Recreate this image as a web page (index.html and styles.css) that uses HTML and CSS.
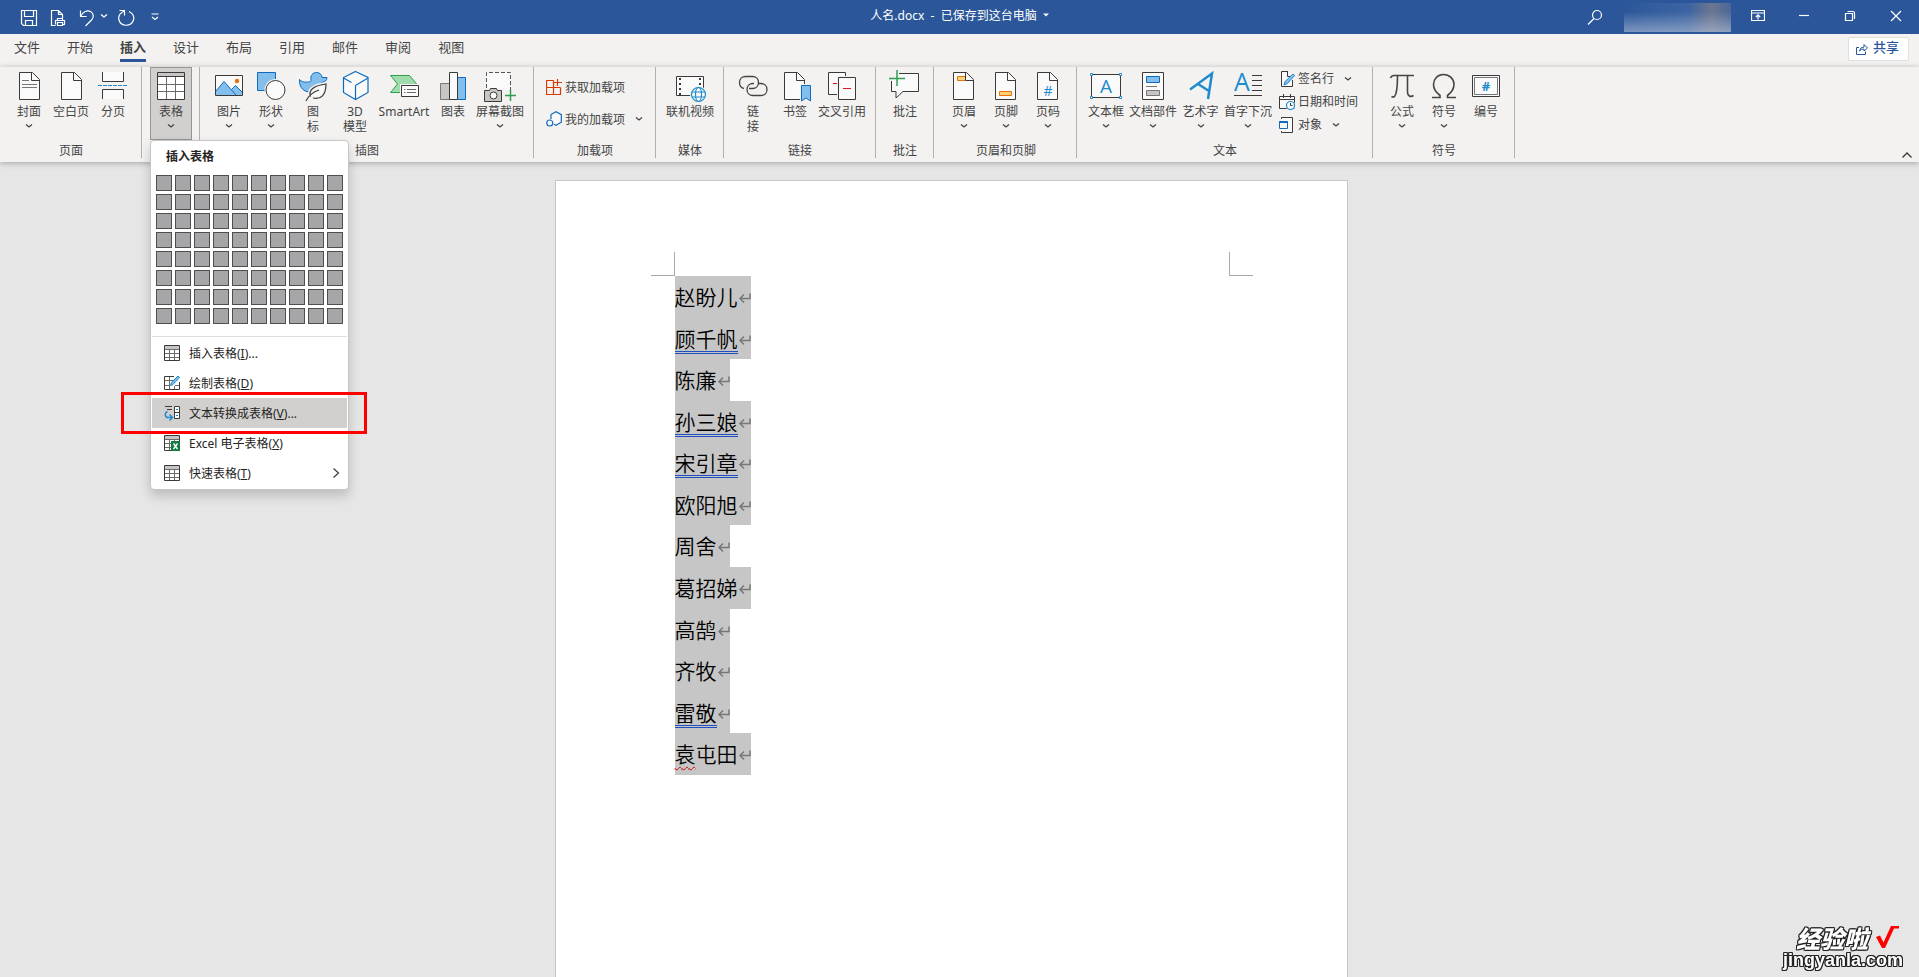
FILE: index.html
```html
<!DOCTYPE html>
<html lang="zh-CN">
<head>
<meta charset="utf-8">
<title>人名.docx</title>
<link rel="stylesheet" href="styles.css">
</head>
<body>
<svg class="defs" aria-hidden="true">
  <symbol id="doc" viewBox="0 0 32 32"><path d="M6.500 2.500h13l7 7v20h-20z" fill="#fafafa" stroke="#3b3a39"/><path d="M18.500 2.500v8h8" fill="none" stroke="#3b3a39"/></symbol>
  <symbol id="chev" viewBox="0 0 8 8"><path d="M1 2.500l3 2.500 3-2.500" fill="none" stroke="currentColor" stroke-width="1.300"/></symbol>
  <symbol id="table" viewBox="0 0 16 16"><path d="M.5.5h15v15H.5z" fill="#fff" stroke="#3b3a39"/><path d="M1 1h14v3H1z" fill="#c8c6c4"/><path d="M1 4.500h14M1 8.500h14M1 12.500h14M5.500 5v10M10.500 5v10" stroke="#6b6a68" fill="none"/></symbol>
  <symbol id="ret" viewBox="0 0 13 13"><path d="M12 1.500v5H2M6 2.500L2 6.500l4 4" fill="none" stroke="#777" stroke-width="1.500"/></symbol>
</svg>

<header class="titlebar">
  <div class="quick">
    <button class="qa" aria-label="保存"><svg width="18" height="18" viewBox="0 0 18 18"><path d="M1.500 1.500h15v15h-13l-2-2zM4.500 1.500v6h9v-6M5.500 16.500v-5h7v5"/></svg></button>
    <button class="qa" aria-label="打印预览"><svg width="18" height="18" viewBox="0 0 18 18"><path d="M6.500 16.500h-4v-15h7l4 4v4M9.500 1.500v4h4M8.500 11.500v-2h5v2M6.500 15.500v-4h9v4h-2M8.500 13.500h5v3h-5z"/></svg></button>
    <button class="qa" aria-label="撤消"><svg width="18" height="18" viewBox="0 0 18 18"><path d="M2.500 1.500v6h6M2.500 7.500C5 3 9 .5 12.500 2.500s3.500 6 1 8.500l-6 6"/></svg></button>
    <button class="qa narrow" aria-label="撤消选项"><svg width="8" height="8"><use href="#chev"/></svg></button>
    <button class="qa" aria-label="重复"><svg width="18" height="18" viewBox="0 0 18 18"><path d="M2.500 1.500h5v5M7.500 2C3 4 1 7.500 2 11c2 7 12 7 14.500 0C17.500 7 15 4 12 2.500"/></svg></button>
    <button class="qa custom" aria-label="自定义快速访问工具栏"><svg width="8" height="8" viewBox="0 0 8 8"><path d="M.5 1h7M1 4l3 2.500L7 4"/></svg></button>
  </div>
  <div class="doctitle">人名.docx&nbsp; -&nbsp; 已保存到这台电脑 <svg width="6" height="6" viewBox="0 0 6 6"><path d="M0 1.500h6l-3 3z" fill="#fff" stroke="none"/></svg></div>
  <div class="window">
    <button class="search" aria-label="搜索"><svg width="16" height="16" viewBox="0 0 16 16"><circle cx="10" cy="6" r="4.500"/><path d="M7 9.500L1 15.500"/></svg></button>
    <div class="account"></div>
    <button class="win" aria-label="功能区显示选项"><svg width="14" height="12" viewBox="0 0 14 12"><path d="M.5.500h13v10H.5zM.5 3h13M7 9.500V5M4.800 7L7 4.800 9.200 7"/></svg></button>
    <button class="win" aria-label="最小化"><svg width="12" height="12" viewBox="0 0 12 12"><path d="M1 5.500h10"/></svg></button>
    <button class="win" aria-label="还原"><svg width="12" height="12" viewBox="0 0 12 12"><path d="M1.500 3.500h7v7h-7zM3.500 1.500h5.500q1.500 0 1.500 1.500v6"/></svg></button>
    <button class="win" aria-label="关闭"><svg width="12" height="12" viewBox="0 0 12 12"><path d="M1 1l10 10M11 1L1 11"/></svg></button>
  </div>
</header>

<nav class="tabs">
  <button class="tab">文件</button><button class="tab">开始</button><button class="tab active">插入</button><button class="tab">设计</button><button class="tab">布局</button><button class="tab">引用</button><button class="tab">邮件</button><button class="tab">审阅</button><button class="tab">视图</button>
  <button class="share"><svg width="12" height="12" viewBox="0 0 12 12"><path d="M3 4.500H.5v7h9V8.500M3.500 8q.5-4 4.500-4V1.500L11.500 5 8 8V6Q5 6 3.500 8z"/></svg>共享</button>
</nav>

<section class="ribbon">
  <div class="group">
    <div class="tools">
      <button class="big"><svg viewBox="0 0 32 32"><use href="#doc"/><path d="M9 10.500h7M9 14.500h15M9 17.500h15" stroke="#777"/></svg><span>封面</span><svg class="chev"><use href="#chev"/></svg></button>
      <button class="big"><svg viewBox="0 0 32 32"><use href="#doc"/></svg><span>空白页</span></button>
      <button class="big"><svg viewBox="0 0 32 32"><path d="M5.500 2v9.500h21V2M5.500 29v-9.500h21V29" fill="#fafafa" stroke="#3b3a39"/><path d="M1 15.500h30" stroke="#1e8bcd" stroke-dasharray="4 1"/></svg><span>分页</span></button>
    </div>
    <div class="caption">页面</div>
  </div>

  <div class="group anchor">
    <div class="tools">
      <button class="big pressed"><svg viewBox="0 0 32 32"><path d="M2.500 2.500h27v27h-27z" fill="#fff" stroke="#3b3a39"/><path d="M3 3h26v3H3z" fill="#c8c6c4"/><path d="M3 6.500h26" stroke="#3b3a39"/><path d="M3 14.500h26M3 21.500h26M11.500 7v22M20.500 7v22" stroke="#6b6a68"/></svg><span>表格</span><svg class="chev"><use href="#chev"/></svg></button>
    </div>
    <div class="menu">
      <h2 class="menu-title">插入表格</h2>
      <div class="cells">
        <i></i><i></i><i></i><i></i><i></i><i></i><i></i><i></i><i></i><i></i>
        <i></i><i></i><i></i><i></i><i></i><i></i><i></i><i></i><i></i><i></i>
        <i></i><i></i><i></i><i></i><i></i><i></i><i></i><i></i><i></i><i></i>
        <i></i><i></i><i></i><i></i><i></i><i></i><i></i><i></i><i></i><i></i>
        <i></i><i></i><i></i><i></i><i></i><i></i><i></i><i></i><i></i><i></i>
        <i></i><i></i><i></i><i></i><i></i><i></i><i></i><i></i><i></i><i></i>
        <i></i><i></i><i></i><i></i><i></i><i></i><i></i><i></i><i></i><i></i>
        <i></i><i></i><i></i><i></i><i></i><i></i><i></i><i></i><i></i><i></i>
      </div>
      <div class="items">
        <button class="item"><svg viewBox="0 0 16 16"><use href="#table"/></svg><span>插入表格(<u>I</u>)...</span></button>
        <button class="item"><svg viewBox="0 0 16 16"><path d="M10 1.500H.5v13h15V7" fill="#fff" stroke="#3b3a39"/><path d="M1 5.500h8M1 10.500h5M5.500 2v12M10.500 11v3M11 10.500h4" stroke="#6b6a68"/><path d="M6.500 10.500l1-3L14 1l1.500 1.500L9 9.500z" fill="#83beec" stroke="#1e8bcd"/></svg><span>绘制表格(<u>D</u>)</span></button>
        <button class="item hover"><svg viewBox="0 0 16 16"><path d="M1 1.500h7M3 4.500h5" stroke="#3b3a39"/><path d="M3.500 6.500C0 8 1 12.500 4 12.500h4M5.500 9.500l3 3-3 3" fill="none" stroke="#1e8bcd" stroke-width="1.500"/><path d="M10.500 1.500h5v12h-5zM10.500 7.500h5" fill="#fff" stroke="#3b3a39"/><path d="M12 4.500h2M12 10.500h2" stroke="#1e8bcd"/></svg><span>文本转换成表格(<u>V</u>)...</span></button>
        <button class="item"><svg viewBox="0 0 16 16"><use href="#table"/><path d="M7 6h9v10H7z" fill="#107c41"/><path d="M9.500 8.500l4 5.500M13.500 8.500l-4 5.500" stroke="#fff" stroke-width="1.400"/></svg><span>Excel 电子表格(<u>X</u>)</span></button>
        <button class="item"><svg viewBox="0 0 16 16"><use href="#table"/></svg><span>快速表格(<u>T</u>)</span><svg class="more" viewBox="0 0 8 10"><path d="M1.500.5L6.500 5l-5 4.500" fill="none" stroke="#3b3a39" stroke-width="1.200"/></svg></button>
      </div>
    </div>
  </div>

  <div class="group">
    <div class="tools">
      <button class="big"><svg viewBox="0 0 32 32"><path d="M2.500 5.500h27v20h-27z" fill="#fafafa" stroke="#3b3a39"/><path d="M3 21l8-9.500 7.500 8 4-4L29 22v3H3z" fill="#83beec"/><path d="M3 21l8-9.500L23 25M18.500 19.500l4-4L29 22" fill="none" stroke="#0f6cbd"/><circle cx="24" cy="11" r="2.200" fill="#e8710a"/></svg><span>图片</span><svg class="chev"><use href="#chev"/></svg></button>
      <button class="big"><svg viewBox="0 0 32 32"><path d="M2.500 2.500h18v18h-18z" fill="#83beec" stroke="#0f6cbd"/><circle cx="20.500" cy="20" r="11" fill="#f3f2f1"/><circle cx="20.500" cy="20" r="9.500" fill="#fafafa" stroke="#3b3a39"/></svg><span>形状</span><svg class="chev"><use href="#chev"/></svg></button>
      <button class="big"><svg viewBox="0 0 32 32"><path d="M14 9.500c-1-4 2-7 5.500-7 3 0 5.500 2 5.500 5h5c0 3-2 4.500-5.500 5 1 5-4 10-11 9.500C7 22 2 18 2.500 9.500c2 2 4 3 7 2.500 3 0 5 0 4.500-2.500z" fill="#83beec" stroke="#0f6cbd"/><path d="M13.500 26.500c-2.500-7 4-11 15.500-12.500 0 11-5 16-13 14z" fill="#fafafa" stroke="#f3f2f1" stroke-width="4"/><path d="M13.500 26.500c-2.500-7 4-11 15.500-12.500 0 11-5 16-13 14M9 31c3-6 7-9 13-11" fill="none" stroke="#3b3a39" stroke-width="1.200"/></svg><span>图<br>标</span></button>
      <button class="big"><svg viewBox="0 0 32 32"><path d="M16.500 1.500l12.500 6v15l-12.500 7-12-7v-15z" fill="#fafafa" stroke="#0f6cbd" stroke-width="1.200"/><path d="M16.500 29V15.500M29 8l-12.500 7.500M4.500 8l8 4.500" fill="none" stroke="#0f6cbd" stroke-width="1.200"/></svg><span>3D<br>模型</span></button>
      <button class="big wide"><svg viewBox="0 0 32 32"><path d="M2.500 5.500h19l7.500 9-7 8H2.500l7-8.500z" fill="#a0dcab" stroke="#2e9f50"/><path d="M12 14h20v14H12z" fill="#f3f2f1"/><path d="M13.500 15.500h17v11h-17z" fill="#fafafa" stroke="#3b3a39"/><path d="M16 19.500h1.500M19 19.500h9M16 22.500h1.500M19 22.500h9" stroke="#6b6a68"/></svg><span>SmartArt</span></button>
      <button class="big"><svg viewBox="0 0 32 32"><path d="M3.500 13.500h9v16h-9z" fill="#c8c6c4" stroke="#777"/><path d="M20.500 7.500h8v22h-8z" fill="#83beec" stroke="#0f6cbd"/><path d="M12.500 2.500h8v27h-8z" fill="#fafafa" stroke="#3b3a39"/></svg><span>图表</span></button>
      <button class="big four"><svg viewBox="0 0 32 32"><path d="M2.500 18v-15.500h24V20" fill="#fafafa" stroke="#555" stroke-dasharray="4 2"/><path d="M.5 20.500h5l1-2h6l1 2h4v11H.5z" fill="#c8c6c4" stroke="#3b3a39"/><circle cx="9.500" cy="25.500" r="3.500" fill="#fafafa" stroke="#3b3a39"/><path d="M26.500 20v11M21 25.500h11" stroke="#2e9f50" stroke-width="1.500"/></svg><span>屏幕截图</span><svg class="chev"><use href="#chev"/></svg></button>
    </div>
    <div class="caption">插图</div>
  </div>

  <div class="group">
    <div class="tools stack two">
      <button class="small"><svg viewBox="0 0 16 16"><path d="M7.500 1.500h-7v14h14v-7M.5 8.500h14M7.500 1.500v14M11.500 0v7M8 3.500h8" fill="none" stroke="#d83b01" stroke-width="1.200"/></svg><span>获取加载项</span></button>
      <button class="small"><svg viewBox="0 0 16 16"><path d="M5 8V3.500L10 .7l5.300 3v7.500l-5.300 3-2-1" fill="#fafafa" stroke="#0f6cbd" stroke-width="1.200"/><circle cx="3.800" cy="12" r="3" fill="#fafafa" stroke="#0f6cbd" stroke-width="1.200"/></svg><span>我的加载项</span><svg class="chev"><use href="#chev"/></svg></button>
    </div>
    <div class="caption">加载项</div>
  </div>

  <div class="group">
    <div class="tools">
      <button class="big four"><svg viewBox="0 0 32 32"><path d="M2.500 6.500h27v19h-27z" fill="#fafafa" stroke="#3b3a39"/><path d="M6 8v17M26 8v8" stroke="#3b3a39" stroke-width="2" stroke-dasharray="2 3"/><circle cx="24.500" cy="24.500" r="8.500" fill="#f3f2f1"/><g fill="none" stroke="#1e8bcd" stroke-width="1.200"><circle cx="24.500" cy="24.500" r="7" fill="#fafafa"/><ellipse cx="24.500" cy="24.500" rx="3" ry="7"/><path d="M18 22h13M18 27h13"/></g></svg><span>联机视频</span></button>
    </div>
    <div class="caption">媒体</div>
  </div>

  <div class="group">
    <div class="tools">
      <button class="big"><svg viewBox="0 0 32 32" fill="none" stroke="#444" stroke-width="1.300"><path d="M7 18.500C4.500 18 2.500 15.500 2.500 12.500c0-3.500 2.500-6 6-6h7c3.500 0 6 2.500 6 6s-2.500 6-6 6H12"/><path d="M21 13.500h3c3.500 0 6 2.500 6 6s-2.500 6-6 6h-8c-3.500 0-6-2.500-6-6s2.500-6 6-6h1"/></svg><span>链<br>接</span></button>
      <button class="big"><svg viewBox="0 0 32 32"><use href="#doc" x="-1"/><path d="M21 14h11v18H21z" fill="#f3f2f1"/><path d="M22.500 15.500h9V31l-4.500-3-4.500 3z" fill="#83beec" stroke="#0f6cbd"/></svg><span>书签</span></button>
      <button class="big four"><svg viewBox="0 0 32 32"><path d="M2.500 2.500h17v22h-17z" fill="#fafafa" stroke="#3b3a39"/><path d="M7 13.500h4" stroke="#e81123"/><path d="M11 6h19v25H11z" fill="#f3f2f1"/><path d="M12.500 7.500h17v22h-17z" fill="#fafafa" stroke="#3b3a39"/><path d="M17 18.500h8" stroke="#e81123"/></svg><span>交叉引用</span></button>
    </div>
    <div class="caption">链接</div>
  </div>

  <div class="group">
    <div class="tools">
      <button class="big"><svg viewBox="0 0 32 32"><path d="M10 3.500h19.500v18H14L7 28v-6.500H2.500V11" fill="#fafafa" stroke="#3b3a39"/><path d="M8 0v16M0 8.500h16" stroke="#2e9f50" stroke-width="1.500"/></svg><span>批注</span></button>
    </div>
    <div class="caption">批注</div>
  </div>

  <div class="group roomy">
    <div class="tools">
      <button class="big"><svg viewBox="0 0 32 32"><use href="#doc" x="-1"/><path d="M17 6.500H9.500v4H17" fill="#ffd27a" stroke="#e8710a"/></svg><span>页眉</span><svg class="chev"><use href="#chev"/></svg></button>
      <button class="big"><svg viewBox="0 0 32 32"><use href="#doc" x="-1"/><path d="M9.500 21.500h12v4h-12z" fill="#ffd27a" stroke="#e8710a"/></svg><span>页脚</span><svg class="chev"><use href="#chev"/></svg></button>
      <button class="big"><svg viewBox="0 0 32 32"><use href="#doc" x="-1"/><text class="hash" x="16" y="26" font-size="14">#</text></svg><span>页码</span><svg class="chev"><use href="#chev"/></svg></button>
    </div>
    <div class="caption">页眉和页脚</div>
  </div>

  <div class="group">
    <div class="tools">
      <button class="big"><svg viewBox="0 0 32 32"><path d="M1.500 4.500h29v23h-29z" fill="#fafafa" stroke="#3b3a39"/><text class="hash" x="16" y="23" font-size="19">A</text><path d="M.5 3.500h2v2h-2zM29.500 3.500h2v2h-2zM.5 26.500h2v2h-2zM29.500 26.500h2v2h-2z" fill="#fff" stroke="#1e8bcd"/></svg><span>文本框</span><svg class="chev"><use href="#chev"/></svg></button>
      <button class="big four"><svg viewBox="0 0 32 32"><path d="M5.500 2.500h21v27h-21z" fill="#fafafa" stroke="#3b3a39"/><path d="M9.500 6.500h13v6h-13z" fill="#83beec" stroke="#0f6cbd"/><path d="M9 16.500h11" stroke="#777"/><path d="M9.500 20.500h13v5h-13z" fill="#c8c6c4" stroke="#777"/></svg><span>文档部件</span><svg class="chev"><use href="#chev"/></svg></button>
      <button class="big art"><svg viewBox="0 0 32 32"><path d="M5 19.500L27 3.500 23 29M13 14l11 7" fill="none" stroke="#1e8bcd" stroke-width="2.500"/></svg><span>艺术字</span><svg class="chev"><use href="#chev"/></svg></button>
      <button class="big four"><svg viewBox="0 0 32 32"><text class="hash" x="10" y="21" font-size="25">A</text><path d="M20 5.500h10M20 10.500h10M20 15.500h10M20 20.500h10M2 25.500h28" stroke="#3b3a39"/></svg><span>首字下沉</span><svg class="chev"><use href="#chev"/></svg></button>
      <div class="stack">
        <button class="small"><svg viewBox="0 0 16 16"><path d="M9 .5H2.500v15h11V9" fill="#fafafa" stroke="#3b3a39"/><path d="M8.500.5v5h3" fill="none" stroke="#3b3a39"/><path d="M5 14l1-3.500L14 3l1.500 1.500-7 8z" fill="#83beec" stroke="#1e8bcd"/></svg><span>签名行</span><svg class="chev"><use href="#chev"/></svg></button>
        <button class="small"><svg viewBox="0 0 16 16"><path d="M.5 2.500h15v12H.5z" fill="#fafafa" stroke="#3b3a39"/><path d="M.5 5.500h15M4.500 0v4M11.500 0v4" stroke="#3b3a39"/><circle cx="11.500" cy="11.500" r="5" fill="#f3f2f1"/><circle cx="11.500" cy="11.500" r="4" fill="#fafafa" stroke="#1e8bcd" stroke-width="1.200"/><path d="M11.500 9v2.500h2" fill="none" stroke="#3b3a39"/></svg><span>日期和时间</span></button>
        <button class="small"><svg viewBox="0 0 16 16"><path d="M2.500 2V.5h11v15h-11V14" fill="#fafafa" stroke="#3b3a39"/><path d="M.5 4.500h8v7h-8z" fill="#fafafa" stroke="#0f6cbd"/><path d="M.5 5h8" stroke="#0f6cbd" stroke-width="2"/></svg><span>对象</span><svg class="chev"><use href="#chev"/></svg></button>
      </div>
    </div>
    <div class="caption">文本</div>
  </div>

  <div class="group">
    <div class="tools">
      <button class="big"><svg viewBox="0 0 32 32"><path d="M4.500 8q1-2.500 3.500-2.500h20M11.500 6c0 9 0 17-3 20.500q-1.500 1-3 0M21.500 6v16c0 4 3 5.500 6 3.500" fill="none" stroke="#444" stroke-width="1.600"/></svg><span>公式</span><svg class="chev"><use href="#chev"/></svg></button>
      <button class="big"><svg viewBox="0 0 32 32"><path d="M4 27.500h8v-2C7.500 22 5.500 18.500 5.500 14.500c0-5.500 4-10 10-10s10.500 4.500 10.500 10c0 4-2 7.500-6.500 11v2H28" fill="none" stroke="#444" stroke-width="1.600"/></svg><span>符号</span><svg class="chev"><use href="#chev"/></svg></button>
      <button class="big"><svg viewBox="0 0 32 32"><path d="M2.500 5.500h27v21h-27z" fill="#fafafa" stroke="#3b3a39"/><path d="M4.500 7.500h23v17h-23z" fill="none" stroke="#777"/><text class="hash bold" x="16" y="21" font-size="13">#</text></svg><span>编号</span></button>
    </div>
    <div class="caption">符号</div>
  </div>
  <button class="collapse" aria-label="折叠功能区"><svg width="10" height="6" viewBox="0 0 10 6"><path d="M.5 5.500L5 1l4.500 4.500" fill="none" stroke="#3b3a39" stroke-width="1.300"/></svg></button>
</section>

<main class="workspace">
  <article class="page">
    <div class="marks"><span class="mark left"></span><span class="mark right"></span></div>
    <div class="lines">
      <p><span>赵盼儿</span><svg><use href="#ret"/></svg></p>
      <p><span class="dbl">顾千帆</span><svg><use href="#ret"/></svg></p>
      <p><span>陈廉</span><svg><use href="#ret"/></svg></p>
      <p><span class="dbl">孙三娘</span><svg><use href="#ret"/></svg></p>
      <p><span class="dbl">宋引章</span><svg><use href="#ret"/></svg></p>
      <p><span>欧阳旭</span><svg><use href="#ret"/></svg></p>
      <p><span>周舍</span><svg><use href="#ret"/></svg></p>
      <p><span>葛招娣</span><svg><use href="#ret"/></svg></p>
      <p><span>高鹄</span><svg><use href="#ret"/></svg></p>
      <p><span>齐牧</span><svg><use href="#ret"/></svg></p>
      <p><span class="dbl">雷敬</span><svg><use href="#ret"/></svg></p>
      <p><span><em class="typo">袁</em>屯田</span><svg><use href="#ret"/></svg></p>
    </div>
  </article>
</main>

<aside class="watermark">
  <div class="wm-top"><span>经验啦</span><svg width="26" height="24" viewBox="0 0 26 24"><path d="M3 12l4-1.500 3.500 7L18 1h8v2.500h-5L12 23H9z" fill="#f00"/></svg></div>
  <div class="wm-url">jingyanla.com</div>
</aside>
</body>
</html>
```
FILE: styles.css
```css
* { box-sizing: border-box; }

body {
  margin: 0;
  min-height: 100vh;
  display: flex;
  flex-direction: column;
  font: 12px/15px "Noto Sans", "Noto Sans CJK SC", sans-serif;
  color: #444;
  background: #e6e6e6;
  overflow: hidden;
}

button {
  margin: 0;
  padding: 0;
  border: 0;
  background: none;
  font: inherit;
  color: inherit;
}

svg { display: block; flex: none; }
.defs { position: absolute; width: 0; height: 0; }

/* Title bar */
.titlebar {
  height: 34px;
  display: grid;
  grid-template-columns: 1fr auto 1fr;
  background: #2b579a;
  color: #fff;
}
.titlebar svg { fill: none; stroke: #fff; stroke-width: 1.2; }
.quick { display: flex; align-items: center; padding: 2px 0 0 20px; gap: 11px; }
.qa { min-width: 18px; display: flex; justify-content: center; }
.narrow { min-width: 8px; margin: 0 -2px 4px -7px; }
.custom { min-width: 8px; margin: 0 0 2px 5px; }
.doctitle { display: flex; align-items: center; gap: 6px; padding-bottom: 4px; }
.window { display: flex; justify-content: flex-end; }
.search { width: 32px; display: grid; place-items: center; margin-right: 13px; }
.account {
  width: 107px;
  height: 29px;
  margin: 3px 4px 0 0;
  background:
    linear-gradient(to bottom, transparent 30%, rgba(190, 200, 220, .55)),
    linear-gradient(to right, #2b579a, #3c64a2 60%, #6c7690 82%, #4a6898);
}
.win { width: 46px; display: grid; place-items: center; padding-bottom: 2px; }

/* Tabs */
.tabs {
  height: 33px;
  display: flex;
  align-items: flex-start;
  gap: 27px;
  padding: 3px 10px 0 14px;
  background: #f3f2f1;
  font-size: 13px;
}
.tab { line-height: 20px; padding-bottom: 2px; border-bottom: 3px solid transparent; }
.active { font-weight: 700; border-color: #2b579a; }
.share {
  margin-left: auto;
  height: 24px;
  display: flex;
  align-items: center;
  gap: 5px;
  padding: 0 9px 3px 7px;
  background: #fff;
  border: 1px solid #e1dfdd;
  border-radius: 2px;
  color: #2b579a;
  font-weight: 500;
}
.share svg { fill: none; stroke: #2b579a; margin-top: 2px; }

/* Ribbon */
.ribbon {
  display: flex;
  padding-bottom: 4px;
  background: #f3f2f1;
  box-shadow: 0 1px 6px rgba(0, 0, 0, .3);
  position: relative;
  z-index: 1;
}
.group {
  display: flex;
  flex-direction: column;
  padding: 0 7px 0 8px;
  border-right: 1px solid #b3b0ad;
  white-space: nowrap;
}
.roomy { padding-left: 9px; }
.tools { display: flex; height: 73px; }
.caption { padding-top: 4px; line-height: 14px; height: 18px; text-align: center; }
.big {
  width: 42px;
  display: flex;
  flex-direction: column;
  align-items: center;
  padding-top: 2px;
  border: 1px solid transparent;
}
.big > svg { width: 32px; height: 32px; overflow: visible; }
.big > span { margin-top: 2px; }
.big > .chev, .chev { width: 8px; height: 8px; margin-top: 3px; }
.wide { width: 56px; }
.four { width: 52px; }
.art { width: 43px; }
.pressed { background: #d2d0ce; border-color: #979593; }
.stack { display: flex; flex-direction: column; }
.two { padding-top: 4px; }
.small { display: flex; align-items: center; height: 23px; padding: 0 7px 0 5px; gap: 3px; }
.two .small { height: 32px; padding: 0 5px 0 4px; }
.small svg { width: 16px; height: 16px; }
.small .chev { width: 8px; height: 8px; margin: 0 0 0 7px; }
.hash {
  font-family: "Open Sans", sans-serif;
  fill: #1e8bcd;
  text-anchor: middle;
}
.bold { font-weight: 700; }
.collapse { margin: auto 7px 0 auto; }

/* Table drop-down */
.anchor { position: relative; }
.menu {
  position: absolute;
  top: 73px;
  left: 8px;
  width: 199px;
  padding: 0 1px 1px;
  background: #fff;
  border: 1px solid #c8c6c4;
  border-radius: 4px;
  box-shadow: 0 6px 12px rgba(0, 0, 0, .18);
  color: #252423;
}
.menu-title { margin: 0; padding: 8px 14px 11px; font-size: 12px; line-height: 15px; }
.cells {
  display: grid;
  grid-template-columns: repeat(10, 16px);
  grid-auto-rows: 16px;
  gap: 3px;
  padding: 0 4px 12px;
}
.cells i { background: #a6a6a8; border: 1px solid #4f4f4f; }
.items { border-top: 1px solid #e1dfdd; padding-top: 1px; }
.item {
  width: 100%;
  height: 30px;
  display: flex;
  align-items: center;
  gap: 9px;
  padding: 0 7px 0 12px;
  position: relative;
}
.item svg { width: 16px; height: 16px; }
.item .more { width: 8px; height: 10px; margin-left: auto; }
.hover { background: #d2d0ce; z-index: 1; }
.hover::after {
  content: "";
  position: absolute;
  inset: -6px -20px -6px -31px;
  border: 3px solid #f00;
}

/* Document */
.workspace { flex: 1; display: flex; justify-content: center; padding: 18px 17px 0 0; }
.page {
  width: 793px;
  padding: 71px 118px 0 119px;
  background: #fff;
  border: 1px solid #c6c6c6;
  border-bottom: 0;
}
.marks { display: flex; justify-content: space-between; margin: 0 -24px; }
.mark { width: 24px; height: 24px; border: 0 solid #ababab; border-bottom-width: 1px; }
.left { border-right-width: 1px; }
.right { border-left-width: 1px; }
.lines {
  height: 499px;
  display: grid;
  grid-auto-rows: 1fr;
  justify-items: start;
  color: #000;
  font-family: "Noto Sans CJK SC", sans-serif;
  font-size: 21px;
  font-weight: 350;
}
.lines p { margin: 0; display: flex; align-items: flex-start; padding-top: 10px; background: #c6c6c6; }
.lines span { line-height: 20px; padding-bottom: 3px; border-bottom: 3px solid transparent; }
.lines .dbl { border-bottom: 3px double #1f4fbf; }
.lines svg { width: 13px; height: 13px; margin-top: 6px; }
.typo { font-style: normal; text-decoration: underline wavy #d00000 1px; text-underline-offset: 4px; }

/* Watermark */
.watermark {
  position: fixed;
  right: 16px;
  bottom: 8px;
  color: #fff;
  font-weight: 700;
  text-shadow: 1px 0 #222, -1px 0 #222, 0 1px #222, 0 -1px #222, 1px 1px #222, -1px -1px #222, 1px -1px #222, -1px 1px #222;
}
.wm-top {
  display: flex;
  justify-content: flex-end;
  gap: 5px;
  padding-right: 4px;
  font: italic 900 24px/26px "Noto Sans CJK SC", sans-serif;
}
.wm-url { font: 700 18px/18px "Liberation Sans", sans-serif; }
```
